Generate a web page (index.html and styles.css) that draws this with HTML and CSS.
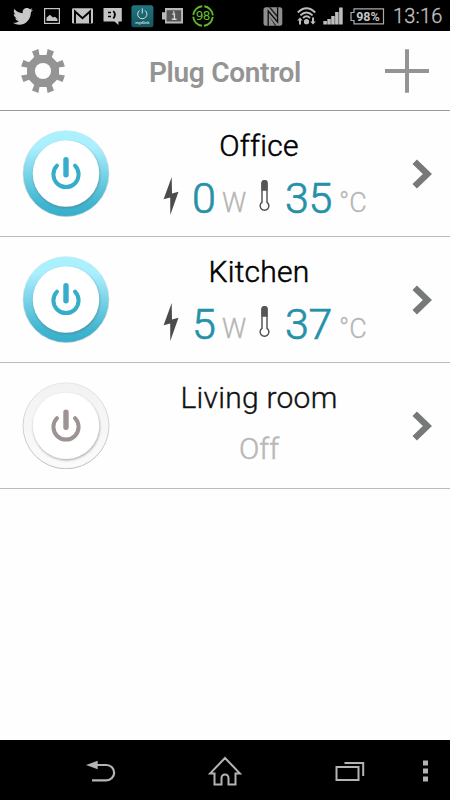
FILE: index.html
```
<!DOCTYPE html>
<html lang="en">
<head>
<meta charset="utf-8">
<meta name="viewport" content="width=device-width">
<title>Plug Control</title>
<link rel="stylesheet" href="styles.css">
</head>
<body>
<svg width="0" height="0" class="defs" aria-hidden="true">
  <defs>
    <linearGradient id="ring-on" x1="0" y1="0" x2="0" y2="1"><stop offset="0" stop-color="#aaf2ff"/><stop offset=".2" stop-color="#aaeffd"/><stop offset=".85" stop-color="#41b5d0"/><stop offset="1" stop-color="#35afcc"/></linearGradient>
    <linearGradient id="ring-off" x1="0" y1="0" x2="0" y2="1"><stop offset="0" stop-color="#f2f2f2"/><stop offset="1" stop-color="#fbfbfb"/></linearGradient>
    <linearGradient id="rim" x1="0" y1="0" x2="0" y2="1"><stop offset="0" stop-color="#e6e6e6"/><stop offset="1" stop-color="#bdbdbd"/></linearGradient>
    <filter id="soft" x="-20%" y="-20%" width="140%" height="140%"><feGaussianBlur stdDeviation="1"/></filter>
    <symbol id="power" viewBox="0 0 30 34">
      <path d="M6 9.2A12.6 12.6 0 1 0 24 9.2" fill="none" stroke="currentColor" stroke-width="4" stroke-linecap="round"/>
      <path d="M15 3.2V18.2" stroke="currentColor" stroke-width="5.4" stroke-linecap="round"/>
    </symbol>
    <symbol id="bolt" viewBox="0 0 16 38"><path d="M8.7 0L.6 22.2L7.2 20.4L7.3 38L15.5 14.8L9 16.5Z" fill="#4b4b4b"/></symbol>
    <symbol id="thermo" viewBox="0 0 11 32">
      <path d="M3 3.2a2.500 2.500 0 0 1 5 0V22.300a4.400 4.400 0 1 1-5 0Z" fill="#fff" stroke="#4d4d4d" stroke-width="1.400"/>
      <path d="M2.400 3.200a3.100 3.100 0 0 1 6.200 0V10.800H2.400Z" fill="#555"/>
    </symbol>
    <symbol id="chevron" viewBox="0 0 21 30"><path d="M2.700 2.700L15.400 15L2.700 27.300" fill="none" stroke="#777978" stroke-width="6.400"/></symbol>
  </defs>
</svg>

<div class="status">
  <svg class="s-bird" width="20" height="17" viewBox="0 0 20 17"><path d="M20 2.1l-2.1 2.1C18 10.5 13.4 16.7 6.4 16.7 4 16.7 1.8 16 0 14.8c2.3.2 4.3-.4 6-1.8-1.9-.1-3.3-1.2-3.8-2.8h1.7C2 9.6 .7 8.1.7 6.1l1.8.5C.8 5.3.3 3 1.4 1.1 3.400 3.500 6.300 5 9.800 5.200 9.100 2.200 11.200 0 13.800 0c1.300 0 2.300.5 3.100 1.300L19.400.3 17.800 2.500Z" fill="#c8c8c8"/></svg>
  <svg class="s-pic" width="16" height="16" viewBox="0 0 16 16"><rect x=".6" y=".6" width="14.8" height="14.800" fill="#000" stroke="#c4c4c4" stroke-width="1.200"/><path d="M2.500 13V9.800L5.800 6.800 9 9.500 11 8.800 13.500 11V13Z" fill="#c4c4c4"/></svg>
  <svg class="s-mail" width="21" height="16" viewBox="0 0 21 16"><rect y=".2" width="21" height="15.300" rx="1.300" fill="#c4c4c4"/><path d="M3 15.500V3.500L10.500 10.300 18 3.500V15.500" fill="none" stroke="#000" stroke-width="1.900"/></svg>
  <svg class="s-chat" width="20" height="17" viewBox="0 0 20 17"><path d="M.5 0H18.800V13.500H15.500V17L11.500 13.500H.5Z" fill="#c4c4c4"/><path d="M5 4.500H8M5 8.500H8M10.300 3Q13.500 6.500 10.300 10.500" fill="none" stroke="#000" stroke-width="1.700"/></svg>
  <svg class="s-app" width="23" height="23" viewBox="0 0 23 23"><defs><linearGradient id="app" x1="0" y1="0" x2="0" y2="1"><stop stop-color="#22757d"/><stop offset="1" stop-color="#125761"/></linearGradient></defs><rect x=".4" y=".2" width="22" height="22" rx="2.500" fill="url(#app)"/><path d="M8.500 5.500A4.600 4.600 0 1 0 14.100 5.500M11.300 3.300V8.500" fill="none" stroke="#d1dfe0" stroke-width="1"/><text x="11.400" y="18.600" text-anchor="middle" class="app-name">mydlink</text></svg>
  <svg class="s-info" width="21" height="16" viewBox="0 0 21 16"><path d="M3 0H21V15.600H3V11.500H0V4.200H3Z" fill="#b9b9b9"/><rect x="4.600" y="2.200" width="14.500" height="11.300" fill="#555"/><path d="M10.300 6H12.400V11M9.800 11.200H14.500M11 4H12.500" fill="none" stroke="#d5d5d5" stroke-width="1.400"/></svg>
  <svg class="s-ring" width="22" height="22" viewBox="0 0 22 22"><circle cx="11" cy="11" r="9.800" fill="none" stroke="#62b82b" stroke-width="1.900" stroke-dasharray="13.390 2" stroke-dashoffset="-1"/><text x="10.700" y="15.200" text-anchor="middle" class="ring-num">98</text></svg>
  <svg class="s-nfc" width="20" height="19" viewBox="0 0 20 19"><rect x=".5" y=".3" width="18.800" height="18.400" rx="2.500" fill="#8e8e8e"/><path d="M5.200 18.700V4L14.600 15V.3" fill="none" stroke="#090909" stroke-width="1.300"/><path d="M5.700 .3H7.500L14.200 8V10.500ZM6 9L7 10.300L13.500 18.700H12Z" fill="#222"/></svg>
  <svg class="s-wifi" width="19" height="18" viewBox="0 0 19 18"><g fill="none" stroke="#bdbdbd" stroke-width="1.900"><path d="M.8 5.500Q9.500-2.800 18.200 5.500M3.400 8.400Q9.500 2.400 15.600 8.400M6 11Q9.500 7.500 13 11"/></g><circle cx="9.500" cy="14.700" r="2.600" fill="#bdbdbd"/><path d="M3 10.500L.2 13.500H2V17.500H4V13.500H5.800ZM16 17.500L13.200 14.500H15V10.500H17V14.500H18.800Z" fill="#bdbdbd"/></svg>
  <svg class="s-signal" width="20" height="18" viewBox="0 0 20 18"><path d="M.3 14H3.900V17.500H.3ZM4.300 12H7.800V17.500H4.300ZM8.200 9H11.700V17.500H8.200ZM12.100 5H15.600V17.500H12.100ZM16.100.5H19.700V17.500H16.100Z" fill="#bdbdbd"/></svg>
  <svg class="s-batt" width="35" height="17" viewBox="0 0 35 17"><path d="M4 .8H33.500V15.800H4V12.500H1V4.500H4Z" fill="none" stroke="#aaa" stroke-width="1.200"/><text x="18" y="12.700" text-anchor="middle" class="batt-num">98%</text></svg>
  <span class="clock">13:16</span>
</div>

<header class="header">
  <svg class="gear" width="44" height="44" viewBox="-22 -22 44 44"><path fill="#949494" d="M-3.500-16L-4.600-21.900L-11-19.600L-8.800-14L-14-8.800L-19.600-11L-21.900-4.600L-16-3.500V3.500L-21.900 4.600L-19.600 11L-14 8.800L-8.800 14L-11 19.600L-4.600 21.900L-3.500 16H3.500L4.600 21.900L11 19.600L8.800 14L14 8.800L19.600 11L21.900 4.600L16 3.500V-3.500L21.900-4.600L19.600-11L14-8.800L8.800-14L11-19.600L4.600-21.900L3.500-16Z"/><circle r="8.100" fill="#fefefe"/></svg>
  <h1 class="title">Plug Control</h1>
  <svg class="plus" width="44" height="44" viewBox="0 0 44 44"><path d="M22 .3V43.700M0 22H44" stroke="#949494" stroke-width="4"/></svg>
</header>

<main>
  <section class="plug">
    <svg class="switch on" width="88" height="88" viewBox="0 -.5 88 88"><circle cx="44" cy="44" r="43" fill="url(#ring-on)" stroke="url(#rim)" stroke-opacity=".55"/><circle cx="44.500" cy="45.200" r="33.400" fill="#557b86" opacity=".6" filter="url(#soft)"/><circle cx="44" cy="44" r="33.300" fill="#fff"/><use href="#power" x="29" y="27" width="30" height="34"/></svg>
    <div class="info">
      <div class="name">Office</div>
      <div class="readings">
        <svg class="bolt" width="16" height="38"><use href="#bolt"/></svg><span class="value">0</span><span class="unit">W</span>
        <svg class="thermo" width="11" height="32"><use href="#thermo"/></svg><span class="value">35</span><span class="unit">°C</span>
      </div>
    </div>
    <svg class="chevron" width="21" height="30"><use href="#chevron"/></svg>
  </section>
  <section class="plug">
    <svg class="switch on" width="88" height="88" viewBox="0 -.5 88 88"><circle cx="44" cy="44" r="43" fill="url(#ring-on)" stroke="url(#rim)" stroke-opacity=".55"/><circle cx="44.500" cy="45.200" r="33.400" fill="#557b86" opacity=".6" filter="url(#soft)"/><circle cx="44" cy="44" r="33.300" fill="#fff"/><use href="#power" x="29" y="27" width="30" height="34"/></svg>
    <div class="info">
      <div class="name">Kitchen</div>
      <div class="readings">
        <svg class="bolt" width="16" height="38"><use href="#bolt"/></svg><span class="value">5</span><span class="unit">W</span>
        <svg class="thermo" width="11" height="32"><use href="#thermo"/></svg><span class="value">37</span><span class="unit">°C</span>
      </div>
    </div>
    <svg class="chevron" width="21" height="30"><use href="#chevron"/></svg>
  </section>
  <section class="plug">
    <svg class="switch" width="88" height="88" viewBox="0 -.8 88 88"><circle cx="44" cy="44" r="43" fill="url(#ring-off)" stroke="url(#rim)"/><circle cx="44.500" cy="45.200" r="33.400" fill="#888" opacity=".65" filter="url(#soft)"/><circle cx="44" cy="44" r="33.300" fill="#fff"/><use href="#power" x="29" y="27.200" width="30" height="34"/></svg>
    <div class="info">
      <div class="name inactive">Living room</div>
      <div class="off">Off</div>
    </div>
    <svg class="chevron" width="21" height="30"><use href="#chevron"/></svg>
  </section>
</main>

<nav class="nav">
  <svg class="n-back" width="30" height="22" viewBox="0 0 30 22"><path d="M11 5H20.500a7.500 7.500 0 0 1 0 15.300H6" fill="none" stroke="#b4b4b4" stroke-width="2.200"/><path d="M0 5L11.700 .8V9.200Z" fill="#b4b4b4"/></svg>
  <svg class="n-home" width="34" height="30" viewBox="0 0 34 30"><path d="M17 2L2 17.500H6.500V28.500H13.500V22a3.500 3.500 0 0 1 7 0V28.500H27.500V17.500H32Z" fill="none" stroke="#b4b4b4" stroke-width="2"/></svg>
  <svg class="n-recent" width="30" height="21" viewBox="0 0 30 21"><path d="M1.500 6H23.500V19H1.500ZM9.500 2H28.200V15" fill="none" stroke="#b4b4b4" stroke-width="2"/></svg>
  <svg class="n-menu" width="5" height="22" viewBox="0 0 5 22"><path d="M0 .5H5V5.500H0ZM0 8.500H5V13.500H0ZM0 16.500H5V21.500H0Z" fill="#b4b4b4"/></svg>
</nav>
</body>
</html>
```
FILE: styles.css
```
* { box-sizing: border-box; }
body {
  margin: 0;
  width: 450px;
  height: 800px;
  display: flex;
  flex-direction: column;
  background: #fefefe;
  font-family: Roboto, "Liberation Sans", sans-serif;
  overflow: hidden;
}
svg { display: block; flex: none; }
.defs { position: absolute; }

.status {
  height: 31px;
  background: #000;
  display: flex;
  align-items: center;
  padding: 1px 0 0 13px;
}
.s-pic { margin-left: 11px; }
.s-mail { margin-left: 12px; }
.s-chat { margin-left: 10px; }
.s-app { margin-left: 8px; }
.s-info { margin-left: 8px; }
.s-ring { margin-left: 9px; }
.s-nfc { margin-left: 49px; }
.s-wifi { margin-left: 14px; }
.s-signal { margin-left: 7px; }
.s-batt { margin-left: 7px; }
.clock {
  margin-left: 8px;
  font-size: 20px;
  line-height: 30px;
  font-weight: 300;
  letter-spacing: .2px;
  color: #c2c2c2;
  -webkit-text-stroke: .3px #c2c2c2;
}
.app-name { font-size: 4px; font-weight: 700; fill: #c1d5d7; }
.ring-num { font: 12px "DejaVu Sans", sans-serif; letter-spacing: -.8px; fill: #68bd31; }
.batt-num { font-size: 12.500px; font-weight: 700; fill: #c5c5c5; }

.header {
  height: 80px;
  border-bottom: 1px solid #999;
  display: flex;
  align-items: center;
  justify-content: space-between;
  padding: 1px 21px 0;
}
.title {
  margin: 4px 0 0;
  font-size: 28px;
  line-height: 34px;
  font-weight: 600;
  letter-spacing: -.3px;
  color: #949494;
}

.plug {
  height: 126px;
  border-bottom: 1px solid #bbb;
  display: flex;
  align-items: center;
  padding: 0 17px 0 22px;
}
.switch { color: #9c9392; margin-top: -1px; }
.switch.on { color: #36adca; }
.info {
  width: 298px;
  height: 125px;
  padding-top: 17px;
  text-align: center;
}
.name {
  font-size: 30px;
  line-height: 36px;
  font-weight: 300;
  letter-spacing: .25px;
  color: #000;
  -webkit-text-stroke: .5px #000;
}
.name.inactive { color: #111; -webkit-text-stroke: .35px #111; }
.readings {
  display: grid;
  grid-template-columns: 29px 30px 37px 26px 54px 30px;
  height: 50px;
  margin: 7px 0 0 53px;
  text-align: left;
}
.value {
  font-size: 43px;
  line-height: 54px;
  font-weight: 300;
  letter-spacing: -.4px;
  color: #2591a8;
  -webkit-text-stroke: .7px #2591a8;
}
.unit {
  font-size: 27px;
  line-height: 65px;
  font-weight: 300;
  color: #b5b5b5;
  -webkit-text-stroke: .3px #b5b5b5;
}
.bolt { margin-top: 6px; }
.thermo { margin-top: 9px; }
.off {
  margin-top: 15px;
  font-size: 30px;
  line-height: 36px;
  font-weight: 300;
  color: #b8b8b8;
  -webkit-text-stroke: .5px #b8b8b8;
}
.chevron { margin-left: 4px; }

.nav {
  height: 60px;
  margin-top: auto;
  background: #000;
  display: flex;
  align-items: center;
  padding: 2px 0 0 86px;
}
.n-home { margin-left: 92px; }
.n-recent { margin-left: 93px; }
.n-menu { margin-left: 58px; }
```
